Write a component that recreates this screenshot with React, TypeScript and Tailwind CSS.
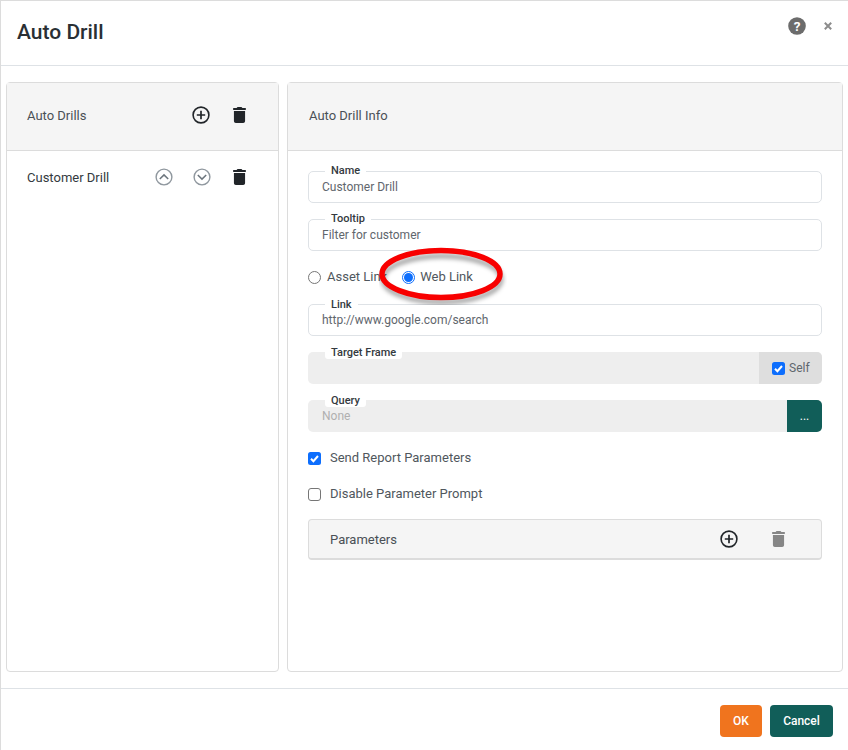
import React from "react";

const Trash = ({ color = "#212529" }: { color?: string }) => (
  <svg width="13" height="16" viewBox="0 0 448 512" preserveAspectRatio="none" fill={color}>
    <path d="M135.2 17.7C140.6 6.8 151.7 0 163.8 0H284.2c12.1 0 23.2 6.8 28.6 17.7L320 32h96c17.7 0 32 14.3 32 32s-14.3 32-32 32H32C14.3 96 0 81.7 0 64S14.3 32 32 32h96l7.2-14.3zM32 128H416V448c0 35.3-28.7 64-64 64H96c-35.3 0-64-28.7-64-64V128z" />
  </svg>
);

const PlusCircle = () => (
  <svg width="18" height="18" viewBox="0 0 18 18" fill="none" stroke="#212529" strokeWidth="1.6">
    <circle cx="9" cy="9" r="7.9" />
    <path d="M9 4.8v8.4M4.8 9h8.4" strokeWidth="1.7" />
  </svg>
);

const Chevron = ({ up }: { up?: boolean }) => (
  <svg width="18" height="18" viewBox="0 0 18 18" fill="none" stroke="#6c757d" strokeWidth="1.4">
    <circle cx="9" cy="9" r="7.9" stroke="#8f979e" />
    <path d={up ? "M4.8 11 9 6.9l4.2 4.1" : "M4.8 7 9 11.1 13.2 7"} strokeWidth="1.5" />
  </svg>
);

const Check = () => (
  <svg width="13" height="13" viewBox="0 0 13 13" className="shrink-0">
    <rect width="13" height="13" rx="2.5" fill="#0d6efd" />
    <path d="M3 6.8 5.4 9.2 10 4" fill="none" stroke="#fff" strokeWidth="2" />
  </svg>
);

const Field = ({
  label,
  value,
  disabled,
  labelPos,
  children,
}: {
  label: string;
  value?: string;
  disabled?: boolean;
  labelPos?: string;
  children?: React.ReactNode;
}) => (
  <div
    className={`relative flex h-8 items-stretch rounded-[5px] ${
      disabled ? "bg-[#eeeeee]" : "border border-[#dee2e6] bg-white"
    }`}
  >
    <span
      className={`absolute h-[13px] rounded-b-[3px] bg-white px-[6px] text-[11px] leading-[13px] font-medium text-[#343a40] ${
        labelPos ?? (disabled ? "-top-[6px] left-[17px]" : "-top-[8px] left-4")
      }`}
    >
      {label}
    </span>
    <span
      className={`flex flex-1 items-center text-[12px] ${
        disabled ? "pl-[14px] text-[#b0b0b0]" : "pl-[13px] text-[#5f666d]"
      }`}
    >
      {value}
    </span>
    {children}
  </div>
);

export default function App() {
  return (
    <div className="relative flex h-[750px] w-[848px] flex-col overflow-hidden border-t border-l border-[#dcdcdc] bg-white font-['Roboto',sans-serif] text-[#343a40]">
      <header className="flex h-[65px] shrink-0 items-center justify-between border-b border-[#dee2e6] pr-[16px] pl-[16px]">
        <h1 className="pb-[1px] text-[21px] font-medium text-[#2a2f34]">Auto Drill</h1>
        <div className="mb-[14px] flex items-center gap-[18px] self-center">
          <svg width="18" height="18" viewBox="0 0 18 18">
            <circle cx="9" cy="9" r="8.8" fill="#6c6c6c" />
            <text x="9" y="13.6" textAnchor="middle" fontSize="13.5" fontWeight="700" fontFamily="Roboto" fill="#fff">?</text>
          </svg>
          <svg width="8" height="8" viewBox="0 0 8 8" stroke="#8c8c8c" strokeWidth="2">
            <path d="M.8.8l6.4 6.4M7.2.8.8 7.2" />
          </svg>
        </div>
      </header>

      <main className="flex min-h-0 flex-1 gap-2 px-[5px] pt-4 pb-4">
        <section className="flex w-[273px] flex-col rounded-[4px] border border-[#dcdcdc]">
          <div className="flex h-[68px] shrink-0 items-center border-b border-[#dcdcdc] bg-[#f5f5f5] pr-[32px] pb-[3px] pl-5 text-[13px] text-[#4a5056]">
            <span className="flex-1 pt-[2px]">Auto Drills</span>
            <span className="mr-[23px] flex"><PlusCircle /></span>
            <Trash />
          </div>
          <div className="flex h-[52px] items-center pr-[32px] pl-5 text-[13px] text-[#343a40]">
            <span className="flex-1 pt-px">Customer Drill</span>
            <span className="mr-[20px] flex"><Chevron up /></span>
            <span className="mr-[22px] flex"><Chevron /></span>
            <Trash />
          </div>
        </section>

        <section className="flex flex-1 flex-col rounded-[4px] border border-[#dcdcdc]">
          <div className="flex h-[68px] shrink-0 items-center border-b border-[#dcdcdc] bg-[#f5f5f5] pb-[2px] pl-[21px] text-[13px] text-[#4a5056]">
            Auto Drill Info
          </div>
          <div className="flex flex-col px-5 pt-5">
            <Field label="Name" value="Customer Drill" />
            <div className="h-4" />
            <Field label="Tooltip" value="Filter for customer" />

            <div className="flex h-[53px] items-center pb-px text-[13px] text-[#50575d]">
              <span className="h-[13px] w-[13px] rounded-full border border-[#767676] bg-white" />
              <span className="ml-[6px]">Asset Link</span>
              <span className="ml-[15px] flex h-[13px] w-[13px] items-center justify-center rounded-full border border-[#0d6efd] bg-white">
                <span className="h-[9px] w-[9px] rounded-full bg-[#0d6efd]" />
              </span>
              <span className="ml-[5px]">Web Link</span>
            </div>

            <Field label="Link" value="http://www.google.com/search" labelPos="-top-[7px] left-4" />
            <div className="h-4" />
            <Field label="Target Frame" disabled>
              <span className="flex w-[63px] items-center gap-[4px] rounded-r-[5px] bg-[#dedede] pl-[13px] text-[12px] text-[#5f666d]">
                <Check />
                Self
              </span>
            </Field>
            <div className="h-4" />
            <Field label="Query" value="None" disabled>
              <span className="flex w-[35px] items-center justify-center rounded-r-[5px] bg-[#115e59] text-[12px] text-white">...</span>
            </Field>

            <label className="mt-[18px] flex h-[16px] items-center gap-[9px] text-[13px] text-[#50575d]">
              <Check />
              Send Report Parameters
            </label>
            <label className="mt-5 flex h-[16px] items-center gap-[9px] text-[13px] text-[#50575d]">
              <span className="h-[13px] w-[13px] rounded-[3px] border border-[#767676] bg-white" />
              Disable Parameter Prompt
            </label>

            <div className="mt-[17px] flex h-[41px] items-center rounded-[4px] border border-b-2 border-[#dcdcdc] bg-[#f5f5f5] pr-[36px] pl-[21px] text-[13px] text-[#4a5056]">
              <span className="flex-1 pt-[2px]">Parameters</span>
              <span className="mr-[34px] flex"><PlusCircle /></span>
              <Trash color="#868686" />
            </div>
          </div>
        </section>
      </main>

      <footer className="flex h-[62px] shrink-0 items-start justify-end gap-2 border-t border-[#dee2e6] pt-4 pr-[15px]">
        <button className="h-8 w-[42px] rounded-[4px] bg-[#f0741e] text-[12px] font-medium text-white">OK</button>
        <button className="h-8 w-[63px] rounded-[4px] bg-[#115e59] text-[12px] font-medium text-white">Cancel</button>
      </footer>

      <svg className="pointer-events-none absolute top-[246px] left-[378px]" width="128" height="58" viewBox="0 0 128 58" fill="none">
        <ellipse cx="62" cy="29" rx="59" ry="23" stroke="#000" strokeOpacity="0.35" strokeWidth="5" transform="translate(1 3)" style={{ filter: "blur(2px)" }} />
        <ellipse cx="62" cy="27" rx="59" ry="23.5" stroke="#f80000" strokeWidth="5.5" />
      </svg>
    </div>
  );
}
